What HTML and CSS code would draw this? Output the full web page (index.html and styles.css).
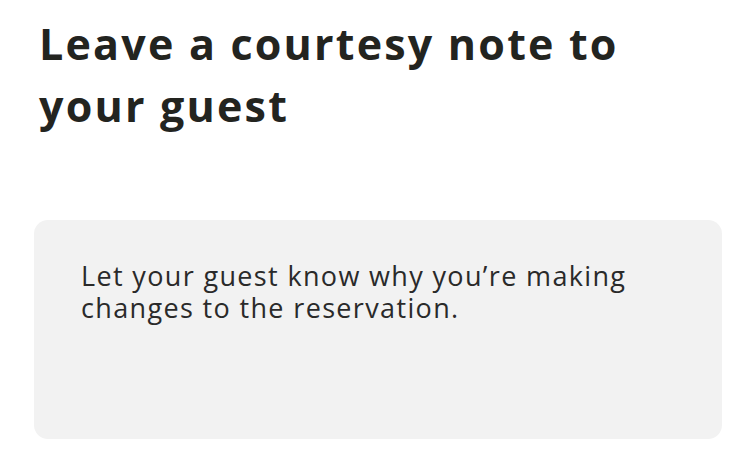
FILE: index.html
```html
<!DOCTYPE html>
<html>
<head>
<meta charset="utf-8">
<link rel="stylesheet" href="styles.css">
</head>
<body>
<main class="page">
  <h1 class="title">Leave a courtesy note to your guest</h1>
  <div class="note">
    <p class="note-text">Let your guest know why you’re making changes to the reservation.</p>
  </div>
</main>
</body>
</html>
```

FILE: styles.css
```css
html, body {
  margin: 0;
  padding: 0;
  background: #ffffff;
}
.page {
  padding: 13px 32px 0 34px;
  font-family: "Open Sans", "Liberation Sans", sans-serif;
}
.title {
  margin: 0 0 0 5px;
  font-size: 43px;
  line-height: 62px;
  font-weight: 700;
  letter-spacing: 2.2px;
  color: #23241f;
  width: 640px;
}
.note {
  margin-top: 83px;
  width: 688px;
  height: 219px;
  box-sizing: border-box;
  background: #f2f2f2;
  border-radius: 14px;
  padding: 40px 48px 0 47px;
}
.note-text {
  margin: 0;
  max-width: 570px;
  font-size: 27px;
  line-height: 32px;
  letter-spacing: 1.35px;
  color: #2a2a2a;
}
```
